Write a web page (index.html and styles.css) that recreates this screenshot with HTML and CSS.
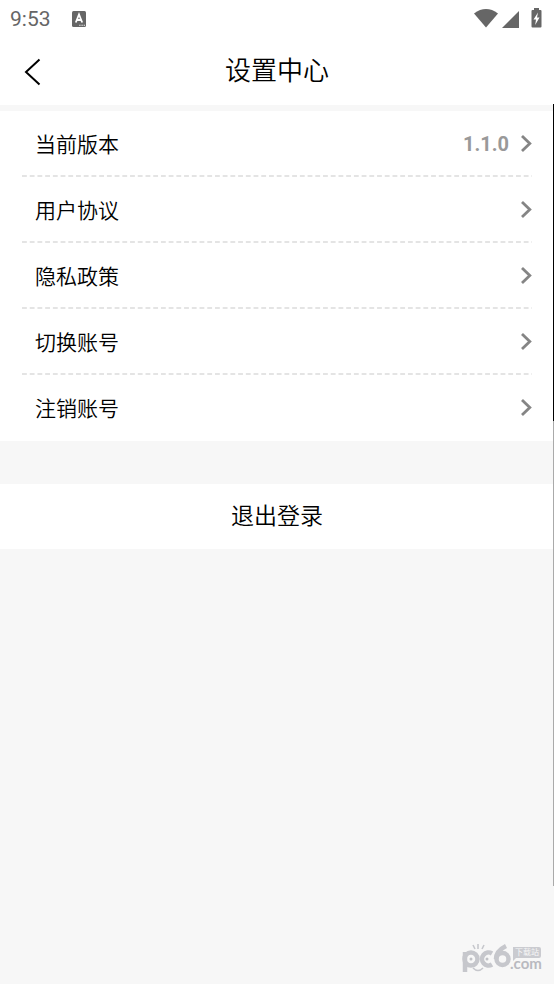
FILE: index.html
```html
<!DOCTYPE html>
<html lang="zh-CN">
<head>
<meta charset="utf-8">
<meta name="viewport" content="width=device-width, initial-scale=1">
<title>设置中心</title>
<link rel="stylesheet" href="styles.css">
</head>
<body>
<svg class="defs" aria-hidden="true">
  <symbol id="chevron" viewBox="0 0 12 20"><path d="M2 2 9.800 9.500 2 17" fill="none" stroke="#858585" stroke-width="2.800"/></symbol>
</svg>
<div class="status">
  <span class="clock">9:53</span>
  <svg class="badge" width="14" height="16" viewBox="0 0 14 16" aria-hidden="true">
    <rect width="14" height="16" rx="1.500" fill="#666"/>
    <path d="M3.800 11.500 7 3.500l3.200 8M5 9h4" fill="none" stroke="#fff" stroke-width="1.800"/>
    <path d="M7.300 14.200h1.200M9.500 14.200h1.200M11.700 14.200h1.200" stroke="#fff" stroke-width="1.100"/>
  </svg>
  <svg class="signals" width="70" height="22" viewBox="0 0 70 22" aria-hidden="true" fill="#666">
    <path d="M1 5.400Q13 -3.400 25 5.400L13 19.500Z"/>
    <path d="M46 3V20H29Z"/>
    <path d="M61 0h5v2h1.500q1 0 1 1V18.500q0 1-1 1H59.500q-1 0-1-1V3q0-1 1-1H61Z"/>
    <path d="M65 4.500 60.500 11.500h2.500l-.8 5.500 4.300-7.500h-2.500Z" fill="#fff"/>
  </svg>
</div>
<header class="header">
  <button class="back" type="button" aria-label="返回">
    <svg width="18" height="28" viewBox="0 0 18 28"><path d="M15.500 1.500 2 14l13.500 12.500" fill="none" stroke="#000" stroke-width="2"/></svg>
  </button>
  <h1 class="title">设置中心</h1>
</header>
<main>
  <nav class="list">
    <a class="row" href="#version"><span class="label">当前版本</span><span class="version">1.1.0</span><svg class="chevron"><use href="#chevron"/></svg></a>
    <a class="row" href="#agreement"><span class="label">用户协议</span><svg class="chevron"><use href="#chevron"/></svg></a>
    <a class="row" href="#privacy"><span class="label">隐私政策</span><svg class="chevron"><use href="#chevron"/></svg></a>
    <a class="row" href="#switch"><span class="label">切换账号</span><svg class="chevron"><use href="#chevron"/></svg></a>
    <a class="row" href="#cancel"><span class="label">注销账号</span><svg class="chevron"><use href="#chevron"/></svg></a>
  </nav>
  <button class="logout" type="button">退出登录</button>
</main>
<div class="edge"></div>
<svg class="mark" width="80" height="32" viewBox="0 0 80 32">
  <g fill="none" stroke="#c6c7cc" stroke-width="4.500">
    <path d="M3 28V8"/><circle cx="9" cy="15" r="6.500"/>
    <path d="M30 9.500A6.500 6.500 0 1 0 30 20.500"/>
    <path d="M44 2Q34 7 34 15"/><circle cx="40.500" cy="15" r="6"/>
  </g>
  <path d="M11 1l2 4M16 0v5M22 1l-2 4M11 24q5 5 10 0" fill="none" stroke="#c6c7cc" stroke-width="1.600"/>
  <circle cx="9" cy="15" r="1.500" fill="#c0c1c6"/><circle cx="25" cy="15" r="1.500" fill="#c0c1c6"/>
  <path d="M51 3h26q2 0 2 2v7q0 2-2 2H54l-3 3Z" fill="#cacbd0"/>
  <text x="53" y="11" class="mark-cn">下载站</text>
  <text x="48" y="25" class="mark-com">.com</text>
</svg>
</body>
</html>
```
FILE: styles.css
```css
* { box-sizing: border-box; }

body {
  margin: 0;
  min-height: 100vh;
  position: relative;
  background: #f7f7f7;
  color: #000;
  font-family: Roboto, "Noto Sans CJK SC", sans-serif;
}

.defs { position: absolute; width: 0; height: 0; }

.status {
  display: flex;
  align-items: center;
  height: 38px;
  padding: 0 11px 0 10px;
  background: #fff;
  color: #666;
}

.clock { font-size: 21px; line-height: 24px; }
.badge { margin-left: 21px; }
.signals { margin-left: auto; }

.header {
  display: grid;
  grid-template-columns: 64px 1fr 64px;
  align-items: center;
  height: 67px;
  background: #fff;
}

.back {
  display: flex;
  padding: 0 0 0 24px;
  border: 0;
  background: none;
}

.title {
  margin: 0;
  padding-bottom: 2px;
  font-size: 26px;
  line-height: 38px;
  font-weight: 350;
  text-align: center;
}

.list {
  margin-top: 6px;
  padding: 0 22px;
  background: #fff;
}

.row {
  display: flex;
  align-items: center;
  height: 66px;
  padding-left: 13px;
  color: #000;
  text-decoration: none;
}

.row:not(:last-child) {
  background: linear-gradient(90deg, #e4e4e4 65%, transparent 65%) left bottom / calc(100% / 66) 2px repeat-x;
}

.label {
  flex: 1;
  padding-top: 2px;
  font-size: 21px;
  font-weight: 350;
  line-height: 32px;
}

.version {
  margin-right: 11px;
  color: #999;
  font-size: 20px;
  font-weight: 700;
}

.chevron { width: 12px; height: 20px; }

.logout {
  display: block;
  width: 100%;
  height: 65px;
  margin-top: 43px;
  padding: 0 0 6px;
  border: 0;
  background: #fff;
  color: #000;
  font-family: inherit;
  font-size: 23px;
  font-weight: 350;
}

.edge {
  position: absolute;
  top: 104px;
  right: 0;
  bottom: 98px;
  width: 1px;
  background: linear-gradient(#000 317px, #aaa 317px);
}

.mark {
  position: absolute;
  right: 12px;
  bottom: 8px;
}

.mark-cn {
  fill: #f7f7f7;
  font-family: "Noto Sans CJK SC", sans-serif;
  font-size: 8px;
}

.mark-com {
  fill: #b9bac0;
  font-family: Lato, sans-serif;
  font-size: 15px;
  font-weight: 700;
}
```
